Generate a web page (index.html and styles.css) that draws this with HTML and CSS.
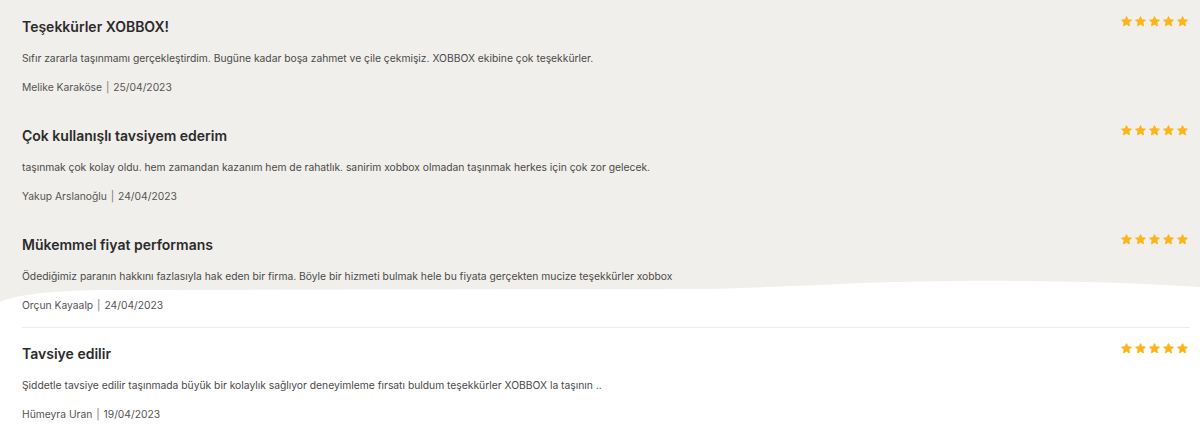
FILE: index.html
```html
<!DOCTYPE html>
<html lang="tr">
<head>
<meta charset="utf-8">
<link rel="stylesheet" href="styles.css">
</head>
<body>
<svg width="0" height="0" class="defs" aria-hidden="true">
  <defs>
    <symbol id="star" viewBox="0 0 24 24">
      <path d="M12 2.8l2.75 5.9 6.45.75-4.78 4.4 1.28 6.37L12 17l-5.7 3.22 1.28-6.37L2.8 9.45l6.45-.75z" fill="#fbb519" stroke="#fbb519" stroke-width="1.6" stroke-linejoin="round"/>
    </symbol>
  </defs>
</svg>
<div class="page">
  <svg class="wave" width="1200" height="310" viewBox="0 0 1200 310" preserveAspectRatio="none">
    <path d="M0,0 H1200 V287 C1150,283 1050,280 950,281 C850,282 800,287 700,289 L100,290 C40,291 15,296 0,302 Z" fill="#f1efeb"/>
  </svg>
  <div class="reviews">
    <div class="review">
      <div class="head">
        <h3 class="title">Teşekkürler XOBBOX!</h3>
        <div class="stars"><svg><use href="#star"/></svg><svg><use href="#star"/></svg><svg><use href="#star"/></svg><svg><use href="#star"/></svg><svg><use href="#star"/></svg></div>
      </div>
      <p class="text">Sıfır zararla taşınmamı gerçekleştirdim. Bugüne kadar boşa zahmet ve çile çekmişiz. XOBBOX ekibine çok teşekkürler.</p>
      <p class="meta">Melike Karaköse <span class="sep">|</span> 25/04/2023</p>
    </div>
    <div class="review">
      <div class="head">
        <h3 class="title">Çok kullanışlı tavsiyem ederim</h3>
        <div class="stars"><svg><use href="#star"/></svg><svg><use href="#star"/></svg><svg><use href="#star"/></svg><svg><use href="#star"/></svg><svg><use href="#star"/></svg></div>
      </div>
      <p class="text">taşınmak çok kolay oldu. hem zamandan kazanım hem de rahatlık. sanirim xobbox olmadan taşınmak herkes için çok zor gelecek.</p>
      <p class="meta">Yakup Arslanoğlu <span class="sep">|</span> 24/04/2023</p>
    </div>
    <div class="review">
      <div class="head">
        <h3 class="title">Mükemmel fiyat performans</h3>
        <div class="stars"><svg><use href="#star"/></svg><svg><use href="#star"/></svg><svg><use href="#star"/></svg><svg><use href="#star"/></svg><svg><use href="#star"/></svg></div>
      </div>
      <p class="text">Ödediğimiz paranın hakkını fazlasıyla hak eden bir firma. Böyle bir hizmeti bulmak hele bu fiyata gerçekten mucize teşekkürler xobbox</p>
      <p class="meta">Orçun Kayaalp <span class="sep">|</span> 24/04/2023</p>
    </div>
    <div class="review">
      <div class="head">
        <h3 class="title">Tavsiye edilir</h3>
        <div class="stars"><svg><use href="#star"/></svg><svg><use href="#star"/></svg><svg><use href="#star"/></svg><svg><use href="#star"/></svg><svg><use href="#star"/></svg></div>
      </div>
      <p class="text">Şiddetle tavsiye edilir taşınmada büyük bir kolaylık sağlıyor deneyimleme fırsatı buldum teşekkürler XOBBOX la taşının ..</p>
      <p class="meta">Hümeyra Uran <span class="sep">|</span> 19/04/2023</p>
    </div>
  </div>
</div>
</body>
</html>
```

FILE: styles.css
```css
* { box-sizing: border-box; }
html, body {
  margin: 0;
  padding: 0;
  background: #ffffff;
}
body {
  font-family: Inter, "Noto Sans", "Liberation Sans", sans-serif;
  color: #333;
}
.defs {
  position: absolute;
  width: 0;
  height: 0;
  overflow: hidden;
}
.page {
  position: relative;
  width: 1200px;
  height: 433px;
  overflow: hidden;
}
.wave {
  position: absolute;
  left: 0;
  top: 0;
  z-index: 0;
}
.reviews {
  position: relative;
  z-index: 1;
  padding: 1px 10px 0 22px;
}
.review {
  padding: 16px 0 14px 0;
  border-bottom: 1px solid #eeede9;
}
.head {
  display: flex;
  justify-content: space-between;
  align-items: flex-start;
}
.title {
  margin: 0;
  font-size: 14px;
  line-height: 20px;
  font-weight: 600;
  color: #2b2b2b;
}
.stars {
  display: flex;
  gap: 1px;
  margin-top: -2px;
  padding-right: 1px;
}
.stars svg {
  width: 13px;
  height: 13px;
  display: block;
}
.text {
  margin: 13px 0 0 0;
  font-size: 10.3px;
  line-height: 16px;
  color: #4a4a4a;
}
.meta {
  margin: 13px 0 0 0;
  font-size: 10.3px;
  line-height: 16px;
  color: #555;
}
.sep {
  color: #777;
  padding: 0 1px;
}
```
